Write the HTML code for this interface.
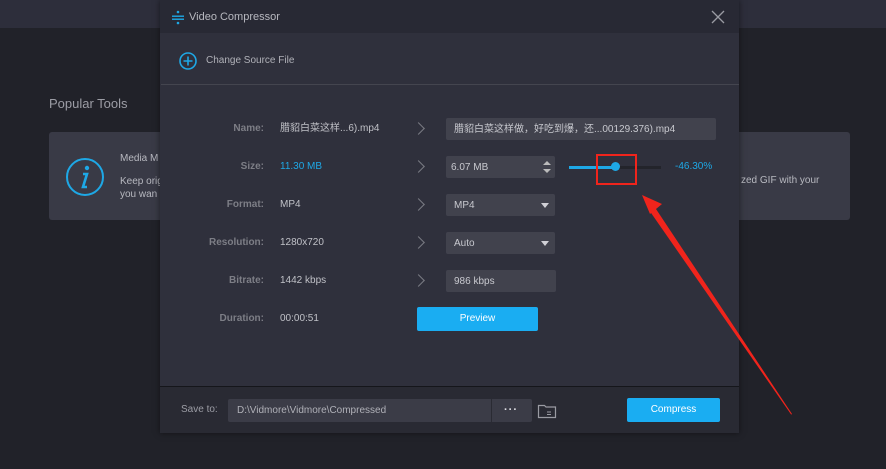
<!DOCTYPE html>
<html><head><meta charset="utf-8"><style>
*{margin:0;padding:0;box-sizing:border-box}
body{width:886px;height:469px;overflow:hidden;background:#212229;font-family:"Liberation Sans","Noto Sans CJK SC",sans-serif;position:relative;font-size:10px;color:#c8c9cf}
.abs{position:absolute}
.lbl{position:absolute;left:160px;width:104px;text-align:right;color:#7d7e86;font-weight:bold;font-size:10px;line-height:14px}
.val{position:absolute;left:280px;color:#c0c1c7;font-size:10px;line-height:14px}
.chev{position:absolute;left:414px;width:9px;height:9px;border-top:1px solid #7a7b83;border-right:1px solid #7a7b83;transform:rotate(45deg)}
.fld{position:absolute;background:#41424d;border-radius:2px;color:#c8c9cf;font-size:10px;padding-left:8px;padding-top:5px;line-height:14px;height:22px}
.dd{position:absolute;right:6px;top:9px;border-left:4px solid transparent;border-right:4px solid transparent;border-top:5px solid #d0d0d6}
</style></head><body>
<div class="abs" style="left:0;top:0;width:886px;height:28px;background:#2d2e3b"></div>
<div class="abs" style="left:49px;top:96px;font-size:13px;color:#9c9da5">Popular Tools</div>
<div class="abs" style="left:49px;top:132px;width:801px;height:88px;background:#393a46;border-radius:3px"></div>
<svg class="abs" style="left:65px;top:157px" width="40" height="40"><circle cx="20" cy="20" r="18" fill="none" stroke="#1ea8e6" stroke-width="2"/><circle cx="22" cy="11" r="2.2" fill="#1ea8e6"/><path d="M18 17h4l-4 13h4" fill="none" stroke="#1ea8e6" stroke-width="2.6"/></svg>
<div class="abs" style="left:120px;top:153px;color:#b8b9c0;font-size:10px">Media M</div>
<div class="abs" style="left:120px;top:175px;color:#b8b9c0;font-size:10px;line-height:13px">Keep orig<br>you wan</div>
<div class="abs" style="left:741px;top:175px;color:#b8b9c0;font-size:10px">zed GIF with your</div>

<div class="abs" style="left:160px;top:0;width:579px;height:433px;background:#2f303c;box-shadow:0 0 6px rgba(0,0,0,.5)"></div>
<div class="abs" style="left:160px;top:0;width:579px;height:33px;background:#282934"></div>
<svg class="abs" style="left:171px;top:10px" width="14" height="15"><circle cx="7" cy="2" r="1.3" fill="#1ea8e6"/><rect x="1" y="5.5" width="12" height="1.4" fill="#1ea8e6"/><rect x="1" y="8.5" width="12" height="1.4" fill="#1ea8e6"/><circle cx="7" cy="13" r="1.3" fill="#1ea8e6"/></svg>
<div class="abs" style="left:189px;top:11px;font-size:11px;color:#b7b8bf">Video Compressor</div>
<svg class="abs" style="left:711px;top:10px" width="14" height="14"><path d="M1 1L13 13M13 1L1 13" stroke="#9a9ba3" stroke-width="1.3"/></svg>
<svg class="abs" style="left:178px;top:51px" width="20" height="20"><circle cx="10" cy="10" r="8" fill="none" stroke="#1ea8e6" stroke-width="1.6"/><path d="M10 5.5v9M5.5 10h9" stroke="#1ea8e6" stroke-width="1.6"/></svg>
<div class="abs" style="left:206px;top:55px;font-size:10px;color:#b0b1b8">Change Source File</div>
<div class="abs" style="left:161px;top:84px;width:578px;height:1px;background:#44454f"></div>

<div class="lbl" style="top:122px">Name:</div><div class="val" style="top:122px">腊貂白菜这样...6).mp4</div>
<div class="chev" style="top:124px"></div>
<div class="fld" style="left:446px;top:118px;width:270px">腊貂白菜这样做，好吃到爆，还...00129.376).mp4</div>

<div class="lbl" style="top:160px">Size:</div><div class="val" style="top:160px;color:#1ea8e6">11.30 MB</div>
<div class="chev" style="top:162px"></div>
<div class="fld" style="left:446px;top:156px;width:109px;padding-left:5px">6.07 MB
<div class="abs" style="right:4px;top:5px;border-left:4px solid transparent;border-right:4px solid transparent;border-bottom:4px solid #bbb"></div>
<div class="abs" style="right:4px;top:13px;border-left:4px solid transparent;border-right:4px solid transparent;border-top:4px solid #bbb"></div></div>
<div class="abs" style="left:569px;top:166px;width:47px;height:3px;background:#1ea8e6"></div>
<div class="abs" style="left:616px;top:166px;width:45px;height:3px;background:#23242b"></div>
<div class="abs" style="left:611px;top:162px;width:9px;height:9px;border-radius:50%;background:#1ea8e6"></div>
<div class="abs" style="left:596px;top:154px;width:41px;height:31px;border:2px solid #f0241c"></div>
<div class="abs" style="left:675px;top:160px;color:#1ea8e6;font-size:10px;line-height:14px">-46.30%</div>

<div class="lbl" style="top:198px">Format:</div><div class="val" style="top:198px">MP4</div>
<div class="chev" style="top:200px"></div>
<div class="fld" style="left:446px;top:194px;width:109px">MP4<div class="dd"></div></div>

<div class="lbl" style="top:236px">Resolution:</div><div class="val" style="top:236px">1280x720</div>
<div class="chev" style="top:238px"></div>
<div class="fld" style="left:446px;top:232px;width:109px">Auto<div class="dd"></div></div>

<div class="lbl" style="top:274px">Bitrate:</div><div class="val" style="top:274px">1442 kbps</div>
<div class="chev" style="top:276px"></div>
<div class="fld" style="left:446px;top:270px;width:110px">986 kbps</div>

<div class="lbl" style="top:312px">Duration:</div><div class="val" style="top:312px">00:00:51</div>
<div class="abs" style="left:417px;top:307px;width:121px;height:24px;background:#1aadf2;border-radius:2px;color:#fff;text-align:center;line-height:24px;font-size:10px">Preview</div>

<div class="abs" style="left:160px;top:386px;width:579px;height:1px;background:#15161b"></div>
<div class="abs" style="left:160px;top:387px;width:579px;height:46px;background:#292a33"></div>
<div class="abs" style="left:181px;top:404px;color:#9c9da5;font-size:10px">Save to:</div>
<div class="abs" style="left:228px;top:399px;width:304px;height:23px;background:#3b3c47;border-radius:2px;color:#b0b1b8;line-height:23px;padding-left:9px;font-size:10px">D:\Vidmore\Vidmore\Compressed</div>
<div class="abs" style="left:491px;top:399px;width:1px;height:23px;background:#2a2b33"></div>
<div class="abs" style="left:504px;top:404px;color:#e0e0e6;font-size:11px;font-weight:bold;letter-spacing:1px">···</div>
<svg class="abs" style="left:537px;top:402px" width="20" height="17"><path d="M1.5 3.5h6l1.5 1.5h9.5v10.5h-17z" fill="none" stroke="#9a9ba3" stroke-width="1.2"/><path d="M10 10h4M10 12.5h4" stroke="#9a9ba3"/></svg>
<div class="abs" style="left:627px;top:398px;width:93px;height:24px;background:#1aadf2;border-radius:2px;color:#fff;text-align:center;line-height:24px;font-size:10px">Compress</div>

<svg class="abs" style="left:0;top:0" width="886" height="469"><path d="M792 414L791.2 414.6L649 210L654 206Z" fill="#f0241c"/><path d="M642 195L662 204L650 214Z" fill="#f0241c"/></svg>
</body></html>
